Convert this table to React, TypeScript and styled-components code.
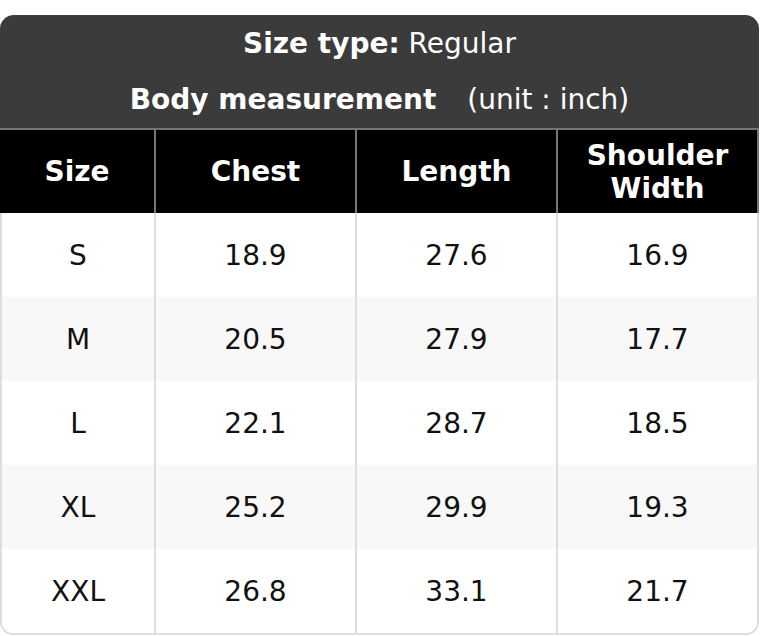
import styled, { createGlobalStyle } from "styled-components";

const GlobalStyle = createGlobalStyle`
  html, body {
    margin: 0;
    padding: 0;
    background: #ffffff;
  }
  body {
    font-family: "DejaVu Sans", "Liberation Sans", sans-serif;
  }
`;

const columns = ["Size", "Chest", "Length", "Shoulder Width"];

const rows = [
  ["S", "18.9", "27.6", "16.9"],
  ["M", "20.5", "27.9", "17.7"],
  ["L", "22.1", "28.7", "18.5"],
  ["XL", "25.2", "29.9", "19.3"],
  ["XXL", "26.8", "33.1", "21.7"],
];

const App = () => {
  return (
    <>
      <GlobalStyle />
      <Card>
        <Title>
          <TitleLine>
            <strong>Size type:</strong> Regular
          </TitleLine>
          <TitleLine>
            <strong>Body measurement</strong>
            <Unit>(unit : inch)</Unit>
          </TitleLine>
        </Title>
        <HeadRow>
          {columns.map((c) => (
            <HeadCell key={c}>{c}</HeadCell>
          ))}
        </HeadRow>
        <Body>
          {rows.map((r, i) => (
            <Row key={r[0]} $shaded={i % 2 === 1}>
              {r.map((v, j) => (
                <Cell key={j}>{v}</Cell>
              ))}
            </Row>
          ))}
        </Body>
      </Card>
    </>
  );
};

export default App;

const Card = styled.div`
  width: 759px;
  margin-top: 15px;
  border-radius: 14px 14px 0 0;
  overflow: hidden;
`;

const Title = styled.div`
  height: 113px;
  padding-top: 1px;
  box-sizing: border-box;
  background: #3b3b3b;
  color: #ffffff;
  font-size: 28px;
  text-align: center;
`;

const TitleLine = styled.div`
  height: 56px;
  line-height: 56px;
  white-space: nowrap;

  strong {
    font-weight: bold;
  }
`;

const Unit = styled.span`
  margin-left: 31px;
`;

const HeadRow = styled.div`
  display: grid;
  grid-template-columns: 156px 201px 201px 201px;
  height: 85px;
  border-top: 2px solid #767676;
  box-sizing: border-box;
  background: #000000;
`;

const HeadCell = styled.div`
  display: flex;
  align-items: center;
  justify-content: center;
  padding: 0 20px;
  border-right: 2px solid #767676;
  color: #ffffff;
  font-size: 28px;
  font-weight: bold;
  line-height: 33px;
  text-align: center;
`;

const Body = styled.div`
  border: 2px solid #dedede;
  border-top: none;
  border-radius: 0 0 13px 13px;
  overflow: hidden;
`;

const Row = styled.div<{ $shaded: boolean }>`
  display: grid;
  grid-template-columns: 154px 201px 201px 199px;
  height: 84px;
  background: ${({ $shaded }) => ($shaded ? "#f8f8f8" : "#ffffff")};
`;

const Cell = styled.div`
  display: flex;
  align-items: center;
  justify-content: center;
  border-right: 2px solid #dedede;
  color: #111111;
  font-size: 28px;

  &:last-child {
    border-right: none;
  }
`;
